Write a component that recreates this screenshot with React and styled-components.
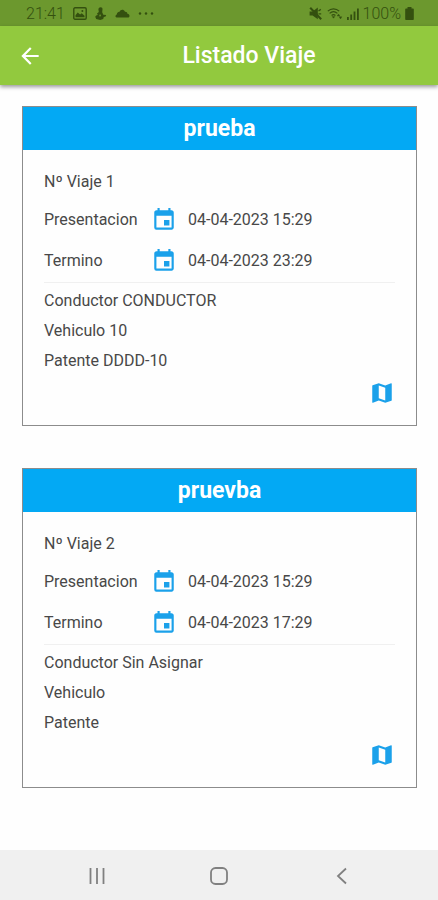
import React from 'react'
import styled, { createGlobalStyle } from 'styled-components'
import { MdArrowBack, MdEvent, MdMap } from 'react-icons/md'

const GlobalStyle = createGlobalStyle`
    * {
        box-sizing: border-box;
    }

    body {
        margin: 0;
        background: #fefefe;
        color: #484848;
        font-family: Roboto, sans-serif;
        font-size: 16px;
    }
`

const Screen = styled.div`
    display: flex;
    flex-direction: column;
    min-height: 100vh;
`

const StatusBar = styled.div`
    display: flex;
    align-items: center;
    justify-content: space-between;
    height: 26px;
    padding: 1px 24px 0 26px;
    background: #6c982e;
    color: #34500f;
    font-size: 16px;
    font-weight: 300;
`

const StatusGroup = styled.div`
    display: flex;
    align-items: center;
    gap: ${({ $gap }) => $gap}px;

    svg {
        display: block;
    }
`

const AppBar = styled.header`
    display: flex;
    align-items: center;
    height: 59px;
    background: #92c93e;
    color: #ffffff;
    box-shadow: 0 2px 4px rgba(0, 0, 0, 0.4);
`

const IconButton = styled.button`
    display: flex;
    align-items: center;
    justify-content: center;
    width: ${({ $width }) => $width || 26}px;
    height: 26px;
    padding: 0;
    border: none;
    background: none;
    color: ${({ $color }) => $color};
    cursor: pointer;
`

const Title = styled.h1`
    flex: 1;
    margin: 0;
    font-size: 23px;
    font-weight: 500;
    text-align: center;
`

const TripList = styled.main`
    display: flex;
    flex: 1;
    flex-direction: column;
    gap: 42px;
    padding: 21px 21px 42px 22px;
`

const Card = styled.article`
    border: 1px solid #8c8c8c;
`

const CardTitle = styled.h2`
    margin: 0;
    background: #03a9f4;
    color: #ffffff;
    font-size: 23px;
    font-weight: 700;
    line-height: 43px;
    text-align: center;
`

const CardBody = styled.div`
    padding: 22px 21px 19px;
`

const TripNumber = styled.div`
    margin-bottom: 7px;
    line-height: 20px;
`

const DateRow = styled.div`
    display: grid;
    grid-template-columns: 107px 26px 1fr;
    align-items: center;
    height: 41px;

    svg {
        color: #1ba1ea;
    }

    time {
        padding-left: 11px;
    }
`

const Details = styled.div`
    margin: 1px 0 4px;
    padding-top: 3px;
    border-top: 1px solid #f0f0f0;
    line-height: 30px;
`

const CardActions = styled.div`
    display: flex;
    justify-content: flex-end;
`

const NavBar = styled.nav`
    display: grid;
    grid-template-columns: repeat(3, 1fr);
    justify-items: center;
    align-items: center;
    height: 50px;
    padding: 2px 36px 0;
    background: #f0f0f0;
`

const trips = [
    {
        id: 1,
        name: 'prueba',
        start: '04-04-2023 15:29',
        end: '04-04-2023 23:29',
        driver: 'CONDUCTOR',
        vehicle: '10',
        plate: 'DDDD-10',
    },
    {
        id: 2,
        name: 'pruevba',
        start: '04-04-2023 15:29',
        end: '04-04-2023 17:29',
        driver: 'Sin Asignar',
        vehicle: '',
        plate: '',
    },
]

const PictureIcon = () => (
    <svg width="14" height="13" viewBox="0 0 14 13" fill="none">
        <rect x="0.8" y="0.8" width="12.4" height="11.4" rx="1.2" stroke="currentColor" strokeWidth="1.4" />
        <path d="M2.5 10.2V8.200l2.200-2.800 2.400 2 1.600-1.200 2.800 2.600v1.400z" fill="currentColor" />
        <circle cx="9.4" cy="4" r="1" fill="currentColor" />
    </svg>
)

const FigureIcon = () => (
    <svg width="12" height="13" viewBox="0 0 12 13" fill="currentColor">
        <path d="M5.6.2C7 .2 7.6 1 7.5 2.3L7.200 5.200 8.300 7.800 11.200 8 10.600 9.600 8.800 10 8.200 12 5.200 12.900 1.200 12 .2 9.800 1.200 8.400 2.800 8 2 6.600 3.800 5 3.400 2.200C3.600.9 4.300.2 5.600.2z" />
        <path d="M4.600 7.600l1.400.2-.4 1.800-1.400-.4z" fill="#6c982e" />
    </svg>
)

const CloudIcon = () => (
    <svg width="15" height="9" viewBox="0 0 15 9" fill="currentColor">
        <path d="M1.600 8.600C0 8.400.2 6.200 1.800 5.500 2 3.500 3.400 2.600 4.600 2.800 5.600.4 8.600 0 10 2.800c1.400-.2 2.400.8 2.400 2 2.600.2 2.800 3.800.6 3.800z" />
    </svg>
)

const DotsIcon = () => (
    <svg width="16" height="3" viewBox="0 0 16 3" fill="currentColor">
        <circle cx="2" cy="1.5" r="1.200" />
        <circle cx="8" cy="1.5" r="1.200" />
        <circle cx="14" cy="1.5" r="1.200" />
    </svg>
)

const MuteIcon = () => (
    <svg width="14" height="13" viewBox="0 0 14 13">
        <path d="M.6 4.400h3L8.800.6v11.600L3.600 8.400h-3z" fill="currentColor" />
        <path d="M1.200.8l11 11.400" stroke="currentColor" strokeWidth="2" />
        <path d="M9.500 6.800h2.700M9.500 4l2.300-1.600" stroke="currentColor" strokeWidth="1.300" />
    </svg>
)

const WifiIcon = () => (
    <svg width="16" height="13" viewBox="0 0 16 13" fill="none" stroke="currentColor">
        <path d="M.8 4.2C4 1 9 1 12.2 4.2M2.6 6.400c2.400-2.200 5.400-2.200 7.800 0M4.600 8.500c1.200-1.100 2.600-1.100 3.800 0" strokeWidth="1.2" />
        <path d="M5.200 9.600h2.600L6.500 11.200zM10.200 9l1.300-2 1.300 2zM12.200 9.800l1.300 2.200 1.300-2.200z" fill="currentColor" strokeWidth="0.4" />
    </svg>
)

const SignalIcon = () => (
    <svg width="12" height="12" viewBox="0 0 12 12" fill="currentColor">
        <path d="M0 9h1.800v3H0zM3.300 6.500h1.800V12H3.300zM6.600 3.500h1.800V12H6.600zM10 .5h1.800V12H10z" />
    </svg>
)

const BatteryIcon = () => (
    <svg width="9" height="13" viewBox="0 0 9 13" fill="currentColor">
        <path d="M2.500 0h4v1.500H8c.5 0 .8.3.8.8v9.900c0 .5-.3.8-.8.8H1c-.5 0-.8-.3-.8-.8V2.300c0-.5.3-.8.8-.8h1.500z" />
    </svg>
)

const TripDate = ({ label, value }) => (
    <DateRow>
        <span>{label}</span>
        <MdEvent size={26} />
        <time>{value}</time>
    </DateRow>
)

const Trip = ({ trip }) => (
    <Card>
        <CardTitle>{trip.name}</CardTitle>
        <CardBody>
            <TripNumber>Nº Viaje {trip.id}</TripNumber>
            <TripDate label="Presentacion" value={trip.start} />
            <TripDate label="Termino" value={trip.end} />
            <Details>
                <div>Conductor {trip.driver}</div>
                <div>Vehiculo {trip.vehicle}</div>
                <div>Patente {trip.plate}</div>
            </Details>
            <CardActions>
                <IconButton $color="#1ba1ea" aria-label="Mapa">
                    <MdMap size={26} />
                </IconButton>
            </CardActions>
        </CardBody>
    </Card>
)

const App = () => {
    return (
        <Screen>
            <GlobalStyle />
            <StatusBar>
                <StatusGroup $gap={8}>
                    <span>21:41</span>
                    <PictureIcon />
                    <FigureIcon />
                    <CloudIcon />
                    <DotsIcon />
                </StatusGroup>
                <StatusGroup $gap={4}>
                    <MuteIcon />
                    <WifiIcon />
                    <SignalIcon />
                    <span>100%</span>
                    <BatteryIcon />
                </StatusGroup>
            </StatusBar>
            <AppBar>
                <IconButton $width={60} $color="#ffffff" aria-label="Volver">
                    <MdArrowBack size={26} />
                </IconButton>
                <Title>Listado Viaje</Title>
            </AppBar>
            <TripList>
                {trips.map(trip => (
                    <Trip key={trip.id} trip={trip} />
                ))}
            </TripList>
            <NavBar>
                <IconButton $color="#808080" aria-label="Recientes">
                    <svg width="18" height="18" viewBox="0 0 18 18" stroke="currentColor" strokeWidth="1.8">
                        <path d="M2.500 1v16M9 1v16M15.500 1v16" />
                    </svg>
                </IconButton>
                <IconButton $color="#808080" aria-label="Inicio">
                    <svg width="18" height="18" viewBox="0 0 18 18" fill="none" stroke="currentColor" strokeWidth="1.8">
                        <rect x="1" y="1" width="16" height="16" rx="4.5" />
                    </svg>
                </IconButton>
                <IconButton $color="#808080" aria-label="Atras">
                    <svg width="18" height="18" viewBox="0 0 18 18" fill="none" stroke="currentColor" strokeWidth="1.8">
                        <path d="M14 1.500L6 9l8 7.500" />
                    </svg>
                </IconButton>
            </NavBar>
        </Screen>
    )
}

export default App
